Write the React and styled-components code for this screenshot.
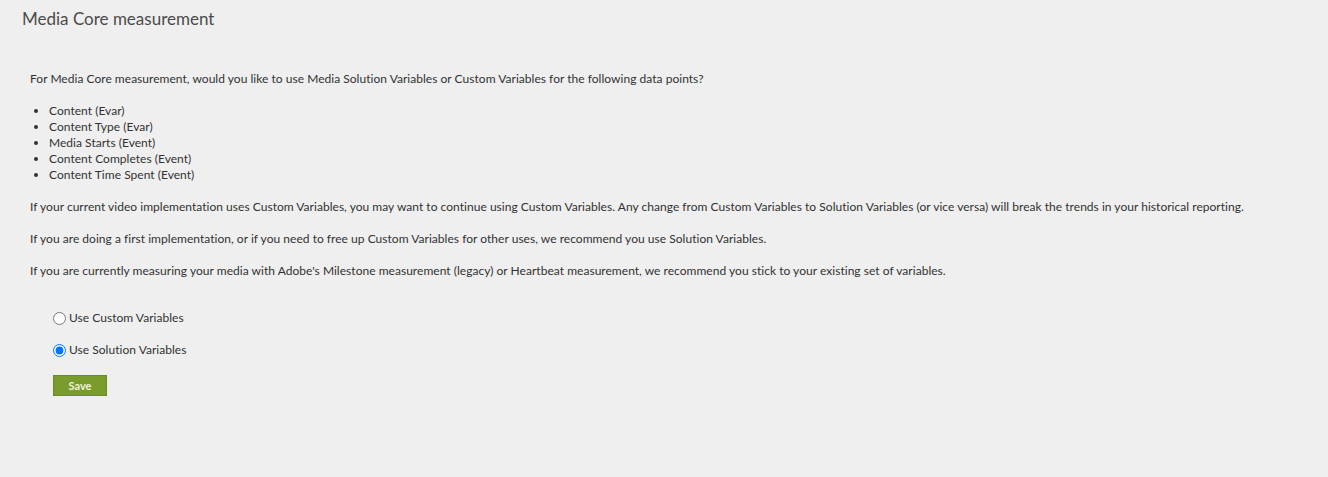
import React, { useState } from "react";
import styled, { createGlobalStyle } from "styled-components";

const GlobalStyle = createGlobalStyle`
  html, body {
    margin: 0;
    padding: 0;
    background-color: #efefef;
  }
  body {
    font-family: "Lato", "Liberation Sans", sans-serif;
    color: #323232;
  }
`;

const PageWrapper = styled.div`
  min-height: 477px;
  background-color: #efefef;
  padding: 9px 22px 0;
  box-sizing: border-box;
`;

const Title = styled.h2`
  margin: 0;
  font-size: 17px;
  line-height: 20px;
  font-weight: normal;
  color: #4b4b4b;
`;

const ContentWrapper = styled.div`
  padding: 42px 0 0 8px;
  font-size: 12px;
  line-height: 16px;
  letter-spacing: 0.03px;
`;

const Paragraph = styled.p`
  margin: 0 0 16px;
`;

const List = styled.ul`
  margin: 0 0 16px;
  padding-left: 19px;
`;

const ListItem = styled.li`
  line-height: 16px;
`;

const OptionsWrapper = styled.div`
  display: flex;
  flex-direction: column;
  gap: 16px;
  padding: 15px 0 0 22px;
`;

const RadioLabel = styled.label`
  display: flex;
  align-items: center;
  height: 16px;
  cursor: pointer;
`;

const RadioInput = styled.input`
  margin: 0 3px 0 1px;
  width: 13px;
  height: 13px;
`;

const SaveBtn = styled.button`
  align-self: flex-start;
  margin: 1px 0 0 1px;
  width: 54px;
  height: 21px;
  border: 1px solid #6b8a22;
  background-color: #7a9c2c;
  color: #eef3dc;
  font-family: inherit;
  font-size: 11px;
  font-weight: bold;
  padding: 0;
  cursor: pointer;
`;

const dataPoints = [
  "Content (Evar)",
  "Content Type (Evar)",
  "Media Starts (Event)",
  "Content Completes (Event)",
  "Content Time Spent (Event)",
];

const App = () => {
  const [choice, setChoice] = useState("solution");

  return (
    <>
      <GlobalStyle />
      <PageWrapper>
        <Title>Media Core measurement</Title>
        <ContentWrapper>
          <Paragraph>
            For Media Core measurement, would you like to use Media Solution Variables or Custom Variables for the following data points?
          </Paragraph>
          <List>
            {dataPoints.map((item) => (
              <ListItem key={item}>{item}</ListItem>
            ))}
          </List>
          <Paragraph>
            If your current video implementation uses Custom Variables, you may want to continue using Custom Variables. Any change from Custom Variables to Solution Variables (or vice versa) will break the trends in your historical reporting.
          </Paragraph>
          <Paragraph>
            If you are doing a first implementation, or if you need to free up Custom Variables for other uses, we recommend you use Solution Variables.
          </Paragraph>
          <Paragraph>
            If you are currently measuring your media with Adobe's Milestone measurement (legacy) or Heartbeat measurement, we recommend you stick to your existing set of variables.
          </Paragraph>
          <OptionsWrapper>
            <RadioLabel>
              <RadioInput
                type="radio"
                name="vars"
                checked={choice === "custom"}
                onChange={() => setChoice("custom")}
              />
              Use Custom Variables
            </RadioLabel>
            <RadioLabel>
              <RadioInput
                type="radio"
                name="vars"
                checked={choice === "solution"}
                onChange={() => setChoice("solution")}
              />
              Use Solution Variables
            </RadioLabel>
            <SaveBtn>Save</SaveBtn>
          </OptionsWrapper>
        </ContentWrapper>
      </PageWrapper>
    </>
  );
};

export default App;
